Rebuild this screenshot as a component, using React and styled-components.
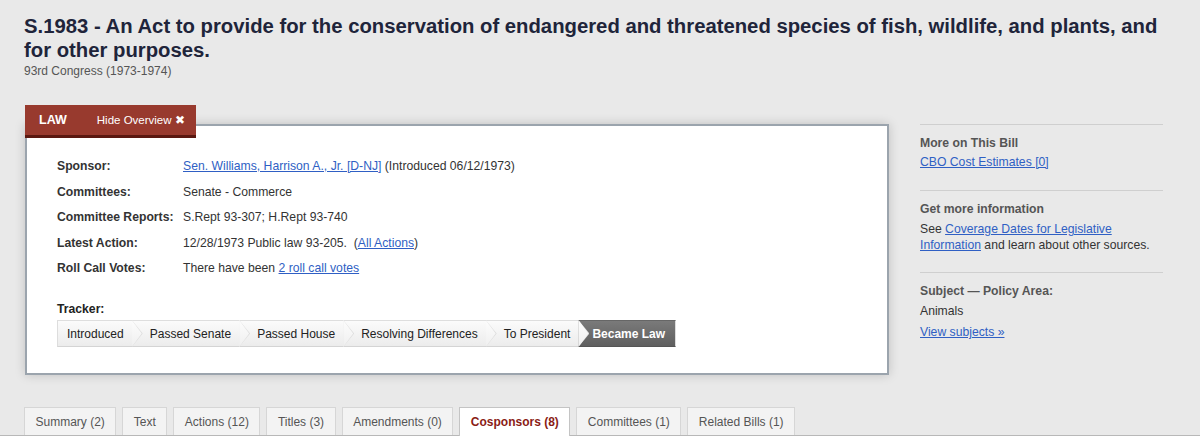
import React from 'react';
import styled, { createGlobalStyle } from 'styled-components';

const GlobalStyle = createGlobalStyle`
  html, body {
    margin: 0;
    padding: 0;
    background: #e9e9e9;
    font-family: "Liberation Sans", Arial, sans-serif;
    color: #333;
  }
  a {
    color: #2f5fc4;
    text-decoration: underline;
  }
`;

const Page = styled.div`
  width: 1200px;
  height: 448px;
  overflow: hidden;
  display: flex;
  flex-direction: column;
`;

const Header = styled.div`
  padding: 14px 24px 0 24px;
`;

const Title = styled.h1`
  margin: 0;
  font-size: 20.3px;
  line-height: 24px;
  font-weight: bold;
  color: #20243a;
`;

const Congress = styled.div`
  margin-top: 2px;
  font-size: 12px;
  color: #555;
`;

const Main = styled.div`
  display: flex;
  gap: 31px;
  padding: 0 24px 0 25px;
  margin-top: 27px;
`;

const OverviewWrap = styled.div`
  position: relative;
  width: 864px;
  padding-top: 19px;
`;

const LawTab = styled.div`
  position: absolute;
  top: 0;
  left: 0;
  z-index: 2;
  width: 171px;
  height: 33px;
  box-sizing: border-box;
  background: #983a2e;
  border-bottom: 3px solid #5a1810;
  display: flex;
  align-items: center;
  padding-left: 14px;
  color: #fff;
  font-size: 11.5px;
`;

const LawLabel = styled.span`
  font-weight: bold;
  font-size: 12.5px;
  margin-right: 30px;
`;

const Box = styled.div`
  background: #fff;
  border: 2px solid #9ba4ad;
  box-shadow: 0 0 10px rgba(0, 0, 0, 0.18);
  height: 251px;
  box-sizing: border-box;
  padding: 32px 30px 0 30px;
`;

const Facts = styled.div`
  display: grid;
  grid-template-columns: 126px 1fr;
  row-gap: 9.5px;
  font-size: 12.2px;
  line-height: 16px;
`;

const Label = styled.div`
  font-weight: bold;
  color: #333;
`;

const Value = styled.div`
  color: #333;
`;

const TrackerLabel = styled.div`
  margin-top: 25px;
  font-weight: bold;
  font-size: 12.2px;
  line-height: 16px;
  color: #222;
`;

const Tracker = styled.div`
  display: flex;
  margin-top: 3px;
  height: 27px;
`;

const Step = styled.div`
  position: relative;
  z-index: ${(p) => p.z};
  display: flex;
  align-items: center;
  height: 27px;
  box-sizing: border-box;
  padding: ${(p) => (p.last ? '0 10px 0 14px' : p.first ? '0 8px 0 9px' : '0 8px 0 18px')};
  font-size: 12px;
  color: ${(p) => (p.active ? '#fff' : '#222')};
  font-weight: ${(p) => (p.active ? 'bold' : 'normal')};
  background: ${(p) =>
    p.active
      ? 'linear-gradient(#7a7a7a, #5f5f5f)'
      : 'linear-gradient(#fbfbfb, #ececec)'};
  border-top: 1px solid ${(p) => (p.active ? '#666' : '#dedede')};
  border-bottom: 1px solid ${(p) => (p.active ? '#555' : '#d4d4d4')};
  border-left: ${(p) => (p.first ? '1px solid #ddd' : 'none')};
  border-right: ${(p) => (p.last ? '1px solid #ddd' : 'none')};

  ${(p) =>
    !p.last &&
    `
    &::before {
      content: '';
      position: absolute;
      top: -1px;
      right: -11px;
      width: 11px;
      height: 27px;
      background: #dcdcdc;
      clip-path: polygon(0 0, 100% 50%, 0 100%);
    }
    &::after {
      content: '';
      position: absolute;
      top: -1px;
      right: -10px;
      width: 10px;
      height: 27px;
      background: linear-gradient(#fdfdfd, #efefef);
      clip-path: polygon(0 0, 100% 50%, 0 100%);
    }
  `}
`;

const Sidebar = styled.div`
  width: 243px;
  padding-top: 19px;
  font-size: 12.2px;
  line-height: 16px;
`;

const Section = styled.div`
  border-top: 1px solid #cfcfcf;
  padding: ${(p) => p.pad || '10px 0 18px 0'};
`;

const SideHeading = styled.div`
  font-weight: bold;
  color: #555;
  margin-bottom: ${(p) => p.gap || 4}px;
`;

const SideText = styled.div`
  color: #333;
  margin-bottom: ${(p) => p.gap || 0}px;
`;

const TabsBar = styled.div`
  margin-top: auto;
  display: flex;
  align-items: flex-end;
  gap: 6px;
  padding-left: 24px;
  border-bottom: 1px solid #b8b8b8;
  height: 30px;
`;

const Tab = styled.div`
  height: ${(p) => (p.active ? 29 : 28)}px;
  box-sizing: border-box;
  padding: 0 10.5px;
  display: flex;
  align-items: center;
  font-size: 12px;
  border: 1px solid ${(p) => (p.active ? '#c4c4c4' : '#d6d6d6')};
  border-bottom: none;
  background: ${(p) => (p.active ? '#fff' : '#f3f3f3')};
  color: ${(p) => (p.active ? '#8a1c16' : '#555')};
  font-weight: ${(p) => (p.active ? 'bold' : 'normal')};
  margin-bottom: ${(p) => (p.active ? -1 : 0)}px;
  padding-bottom: ${(p) => (p.active ? 1 : 0)}px;
`;

const Below = styled.div`
  background: #fff;
  height: 12px;
`;

const steps = [
  'Introduced',
  'Passed Senate',
  'Passed House',
  'Resolving Differences',
  'To President',
  'Became Law',
];

const tabs = [
  'Summary (2)',
  'Text',
  'Actions (12)',
  'Titles (3)',
  'Amendments (0)',
  'Cosponsors (8)',
  'Committees (1)',
  'Related Bills (1)',
];

const App = () => {
  return (
    <Page>
      <GlobalStyle />
      <Header>
        <Title>
          S.1983 - An Act to provide for the conservation of endangered and threatened species of
          fish, wildlife, and plants, and for other purposes.
        </Title>
        <Congress>93rd Congress (1973-1974)</Congress>
      </Header>

      <Main>
        <OverviewWrap>
          <LawTab>
            <LawLabel>LAW</LawLabel>
            Hide Overview ✖
          </LawTab>
          <Box>
            <Facts>
              <Label>Sponsor:</Label>
              <Value>
                <a href="#">Sen. Williams, Harrison A., Jr. [D-NJ]</a> (Introduced 06/12/1973)
              </Value>
              <Label>Committees:</Label>
              <Value>Senate - Commerce</Value>
              <Label>Committee Reports:</Label>
              <Value>S.Rept 93-307; H.Rept 93-740</Value>
              <Label>Latest Action:</Label>
              <Value>
                12/28/1973 Public law 93-205.&nbsp; (<a href="#">All Actions</a>)
              </Value>
              <Label>Roll Call Votes:</Label>
              <Value>
                There have been <a href="#">2 roll call votes</a>
              </Value>
            </Facts>
            <TrackerLabel>Tracker:</TrackerLabel>
            <Tracker>
              {steps.map((s, i) => (
                <Step
                  key={s}
                  first={i === 0}
                  last={i === steps.length - 1}
                  active={i === steps.length - 1}
                  z={steps.length - i}
                >
                  {s}
                </Step>
              ))}
            </Tracker>
          </Box>
        </OverviewWrap>

        <Sidebar>
          <Section pad="10px 0 20px 0">
            <SideHeading gap={3}>More on This Bill</SideHeading>
            <a href="#">CBO Cost Estimates [0]</a>
          </Section>
          <Section pad="10px 0 19px 0">
            <SideHeading gap={4}>Get more information</SideHeading>
            <SideText>
              See <a href="#">Coverage Dates for Legislative Information</a> and learn about other
              sources.
            </SideText>
          </Section>
          <Section>
            <SideHeading gap={4}>Subject — Policy Area:</SideHeading>
            <SideText gap={5}>Animals</SideText>
            <a href="#">View subjects »</a>
          </Section>
        </Sidebar>
      </Main>

      <TabsBar>
        {tabs.map((t) => (
          <Tab key={t} active={t.startsWith('Cosponsors')}>
            {t}
          </Tab>
        ))}
      </TabsBar>
      <Below />
    </Page>
  );
};

export default App;
